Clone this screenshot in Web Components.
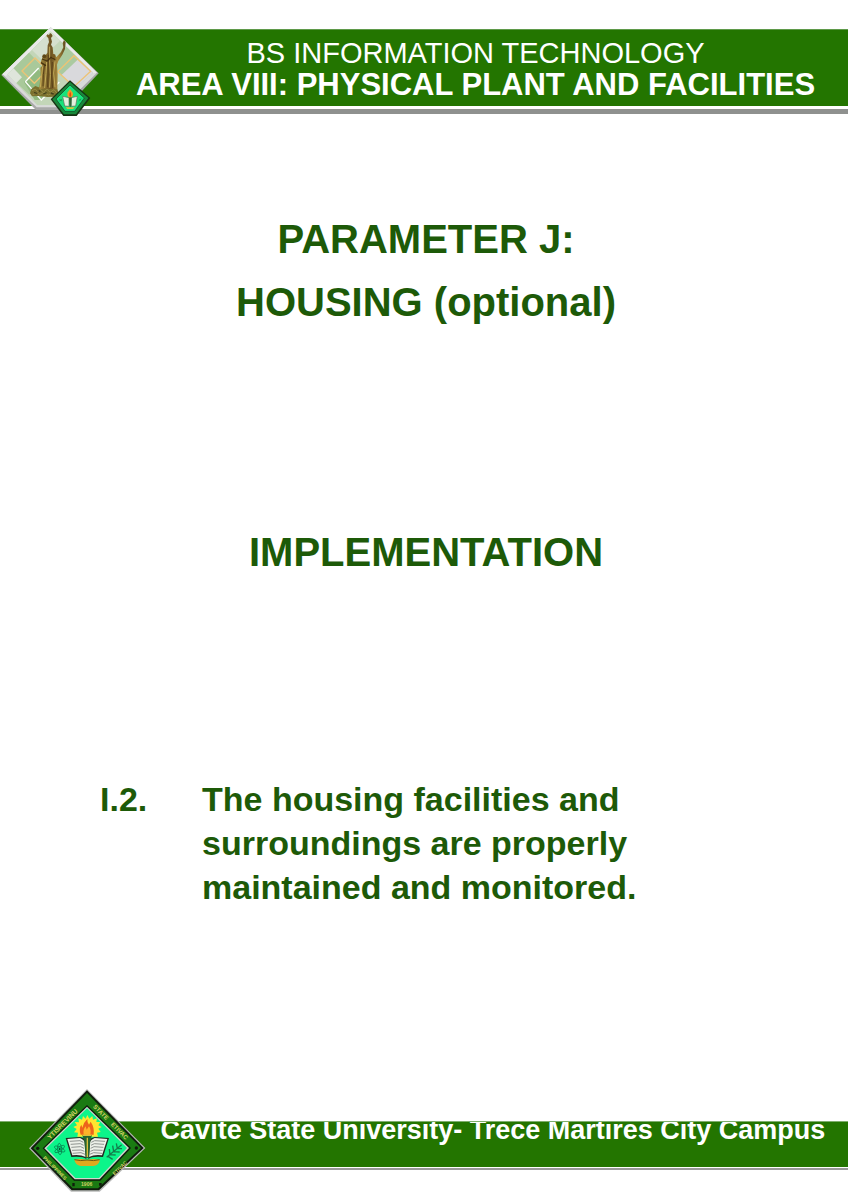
<!DOCTYPE html>
<html lang="en">
<head>
<meta charset="utf-8">
<meta name="viewport" content="width=device-width, initial-scale=1">
<title>Area VIII: Physical Plant and Facilities</title>
<style>
  body { margin: 0; background: #fff; font-family: "Liberation Sans", Arial, sans-serif; }
</style>
</head>
<body>
<cover-page>
  <area-header slot="header">
    <span slot="program">BS INFORMATION TECHNOLOGY</span>
    <span slot="area">AREA VIII: PHYSICAL PLANT AND FACILITIES</span>
  </area-header>
  <section-title>PARAMETER J:<br>HOUSING (optional)</section-title>
  <section-title>IMPLEMENTATION</section-title>
  <numbered-item>
    <span slot="number">I.2.</span>
    The housing facilities and surroundings are properly maintained and monitored.
  </numbered-item>
  <campus-footer slot="footer">Cavite State University- Trece Martires City Campus</campus-footer>
</cover-page>

<script>
function define(name, html) {
  const template = document.createElement('template');
  template.innerHTML = html;
  customElements.define(name, class extends HTMLElement {
    constructor() {
      super();
      this.attachShadow({ mode: 'open' }).append(template.content.cloneNode(true));
    }
  });
}

/* Page frame: header, growing body, footer */
define('cover-page', `
<style>
  :host { display: flex; flex-direction: column; min-height: 100vh; }
  main { flex: 1; display: flex; flex-direction: column; gap: 187px; padding: 94px 96px 96px 100px; }
</style>
<slot name="header"></slot>
<main><slot></slot></main>
<slot name="footer"></slot>`);

define('area-header', `
<style>
  :host { display: block; position: relative; padding-top: 29px; }
  .bar { background: #237500; border-top: 1px solid #5f9a4a; box-sizing: border-box; min-height: 77px;
         padding: 8px 0 0 103px; color: #fff; text-align: center; }
  p, h1 { margin: 0; line-height: 31px; }
  p { font-size: 29px; }
  h1 { font-size: 31px; font-weight: bold; }
  .rule { margin-top: 3px; height: 5px; background: #8f918f; }
  statue-emblem { position: absolute; left: 0; top: 20px; }
</style>
<header>
  <div class="bar">
    <p><slot name="program"></slot></p>
    <h1><slot name="area"></slot></h1>
  </div>
  <div class="rule"></div>
  <statue-emblem></statue-emblem>
</header>`);

define('section-title', `
<style>
  :host { display: block; }
  h2 { margin: 0; color: #1d5a08; font-size: 40px; line-height: 63px; font-weight: bold; text-align: center; }
</style>
<h2><slot></slot></h2>`);

define('numbered-item', `
<style>
  :host { display: grid; grid-template-columns: 102px minmax(0, 450px); padding-top: 6px; color: #1d5a08;
          font-size: 34px; line-height: 44px; font-weight: bold; }
</style>
<slot name="number"></slot>
<div><slot></slot></div>`);

define('campus-footer', `
<style>
  :host { display: block; position: relative; padding-bottom: 30px; }
  .bar { background: #237500; border-top: 1px solid #7fae6d; box-sizing: border-box; height: 46px;
         padding-left: 138px; color: #fff; text-align: center; overflow: hidden; }
  p { margin: -7px 0 0; font-size: 27px; line-height: 30px; font-weight: bold; }
  .rule { margin-top: 1px; height: 2px; background: #9a9a9a; }
  university-seal { position: absolute; left: 28px; top: -33px; }
</style>
<footer>
  <div class="bar"><p><slot></slot></p></div>
  <div class="rule"></div>
  <university-seal></university-seal>
</footer>`);

/* Grey diamond plaque with the bronze statue and a small seal */
define('statue-emblem', `
<style>
  :host { display: block; width: 100px; height: 97px; }
  svg { display: block; }
</style>
<svg width="100" height="97" viewBox="0 0 300 291" aria-hidden="true">
  <defs>
    <clipPath id="face"><path d="M152 34 280 158 166 256H112L22 163Z"/></clipPath>
    <linearGradient id="bronze" x1="0" x2="1"><stop offset="0" stop-color="#a38a3c"/><stop offset=".45" stop-color="#6b5222"/><stop offset=".7" stop-color="#a98a3e"/><stop offset="1" stop-color="#5d481e"/></linearGradient>
  </defs>
  <path d="M152 22 296 160 192 270H108L4 165Z" fill="#a8a9a8"/>
  <path d="M152 22 291 158 186 262H110L7 163Z" fill="#d9dad9"/>
  <path d="M152 22 7 163 18 168 152 36 278 160 291 158Z" fill="#e9eae9"/>
  <g clip-path="url(#face)">
    <path d="M0 0H300V291H0Z" fill="#c3d6b8"/>
    <path d="M22 163 86 97 146 160 88 224Z" fill="#a9c99a"/>
    <path d="M40 144 66 172 40 198 0 163Z" fill="#dfe5db"/>
    <path d="M222 104 280 158 226 206 172 155Z" fill="#d9d9dc"/>
    <path d="M152 34 96 90 124 118 180 62Z" fill="#d5e0ce"/>
    <path d="M200 80 148 132 184 166 236 116Z" fill="#abcaa0"/>
    <path d="M72 186 112 146 152 188 124 240H104Z" fill="#91ba80"/>
    <path d="M66 153 105 114 142 150 103 190Z M173 155 222 107 272 154 222 200Z" fill="none" stroke="#edc374" stroke-width="4"/>
    <path d="M76 185 116 144M76 185 124 240 178 186" fill="none" stroke="#fff" stroke-width="4"/>
  </g>
  <path d="M94 207 106 198 122 204 140 196 160 202 172 206 178 228 168 230 142 231 116 228 96 229 90 220Z" fill="#7b702d"/>
  <path d="M96 212l10-5 6 8 10-7 8 9 12-10 8 10 12-8 10 12M98 224l13-6 8 6 13-7 13 8 16-8" fill="none" stroke="#988a45" stroke-width="3"/>
  <path d="M102 218l10 2M130 222l10-4M152 219l9 3M116 211l5 4" stroke="#42411c" stroke-width="4"/>
  <path d="M139 48 142 43 147 45 150 39 155 42 158 48 153 54 156 65 153 74 158 82 160 102 169 112 183 96 190 82 188 69 192 60 197 67 195 87 187 104 175 123 171 134 173 162 172 207H117L122 170 121 143 127 137 122 127 128 110 137 106 142 98 143 76 147 66 145 55Z" fill="url(#bronze)"/>
  <path d="M128 139 125 165 121 202M140 126 138 160 134 204M149 80V122L151 164 149 203M165 124 161 159 165 202" fill="none" stroke="#c4ab58" stroke-width="3"/>
  <path d="M134 132 130 164 129 199M145 104 144 165 143 202M157 126 155 168 158 204" fill="none" stroke="#5a4119" stroke-width="3"/>
  <path d="M126 117 142 123 153 112 166 119M123 128 138 137" fill="none" stroke="#493510" stroke-width="4"/>
  <circle cx="133" cy="109" r="6" fill="#5f4817"/><circle cx="161" cy="108" r="6" fill="#765b23"/>
  <path d="M210 181 271 234 230 288H190L152 238Z" fill="#153313"/>
  <path d="M210 186 265 234 228 283H192L157 238Z" fill="#18883a"/>
  <path d="M210 195 253 234 224 274H195L168 237Z" fill="#18e27b" stroke="#123d20" stroke-width="2"/>
  <path d="M188 229 207 233V259L194 258ZM232 229 214 233V259L227 258Z" fill="#e4f0dd" stroke="#606b58" stroke-width="2"/>
  <path d="M207 232H215L213 260H209Z" fill="#326637"/>
  <path d="M202 226Q201 216 206 213L210 207 217 216Q222 224 215 232H206Z" fill="#f29b25"/>
  <path d="M208 229Q207 219 211 215 215 222 213 230Z" fill="#e04818"/>
  <path d="M197 262H224L219 267H202Z" fill="#d7c63e"/>
  <path d="M178 238l8 5m0-5-8 5M236 243l8-7m-5 1 4 5" stroke="#188247" stroke-width="2"/>
</svg>`);

/* University seal: lettered green frame, flame, torch and open book */
define('university-seal', `
<style>
  :host { display: block; width: 119px; height: 105px; }
  svg { display: block; }
  text { font: bold 20px "Liberation Sans", Arial, sans-serif; fill: #d3d065; text-anchor: middle; }
  .mid { font-size: 18px; }
  .small { font-size: 15px; }
</style>
<svg width="119" height="105" viewBox="24 24 357 315" role="img" aria-label="Cavite State University seal">
  <path d="M201 27 376 204 239 335H153L27 205Z" fill="#b9bab9"/>
  <path d="M201 31 371 204 237 331H155L32 205Z" fill="#101c0c"/>
  <path d="M201 39 363 204 234 325H158L40 205Z" fill="#1a7a12"/>
  <path d="M201 75 333 204 241 302H162L68 205Z" fill="#0c180b"/>
  <path d="M201 80 327 204 239 298H164L73 205Z" fill="#d0d6cd"/>
  <path d="M201 85 321 204 237 294H166L79 205Z" fill="#0cf58a"/>
  <text transform="translate(132 137) rotate(-45)">YTISREVINU</text>
  <text class="mid" transform="translate(238 101) rotate(45)">STATE</text>
  <text class="mid" transform="translate(294 157) rotate(45)">ETIVAC</text>
  <text class="small" transform="translate(303 268) rotate(-44)">ETIVAC</text>
  <text class="small" transform="translate(101 268) rotate(45)">PHILIPPINES</text>
  <text class="small" x="200" y="319">1906</text>
  <g fill="#101c0c"><circle cx="53" cy="205" r="5"/><circle cx="349" cy="204" r="5"/><path d="M157 309h7v10h-7zM237 309h8v8h-8z"/></g>
  <path d="M202 105 208 116 217 108 219 119 231 115 229 126 241 126 235 136 245 141 235 146 242 156 231 158 234 170H172L174 158 162 157 170 147 160 141 171 136 164 126 177 127 175 115 186 119 189 108 197 116Z" fill="#ffe52f"/>
  <path d="M182 164Q176 145 184 134L187 143Q190 128 202 117 201 129 207 134L212 125Q224 142 221 164Z" fill="#ed631b"/>
  <path d="M191 164Q188 149 197 139L200 149 207 139Q214 149 211 165Z" fill="#ffb429"/>
  <path d="M137 174 181 171Q195 174 199 184V237Q188 228 154 231Z" fill="#232821"/>
  <path d="M267 174 224 171Q210 174 205 184V237Q216 228 249 231Z" fill="#232821"/>
  <path d="M142 177 180 174Q192 179 194 187L197 231Q181 223 157 226ZM262 177 224 174Q212 179 210 187L207 231Q223 223 246 226Z" fill="#edf0e9"/>
  <path d="M149 184l31-2 10 5M152 193l29-2 10 5M154 202l28-2 10 5M156 211l27-1 10 4M158 220l25-2 12 5M255 184l-31-2-10 5M252 193l-29-2-10 5M250 202l-28-2-10 5M248 211l-27-1-10 4M246 220l-25-2-12 5" fill="none" stroke="#8f9490" stroke-width="3"/>
  <path d="M187 166H216L211 183 207 234H197L193 183Z" fill="#29632f"/>
  <path d="M189 166H214M202 173V231" stroke="#dac03a" stroke-width="4"/>
  <path d="M163 239Q182 234 201 240 221 234 239 239L239 244Q235 256 220 258H182Q166 255 163 239Z" fill="#e0aa1e"/>
  <path d="M163 239Q182 244 201 240 221 244 239 239" fill="none" stroke="#725b12" stroke-width="3"/>
  <g fill="none" stroke="#087047" stroke-width="2"><ellipse cx="119" cy="207" rx="17" ry="6" transform="rotate(25 119 207)"/><ellipse cx="119" cy="207" rx="17" ry="6" transform="rotate(85 119 207)"/><ellipse cx="119" cy="207" rx="17" ry="6" transform="rotate(145 119 207)"/></g>
  <circle cx="119" cy="207" r="3" fill="#093f28"/>
  <path d="M260 232 305 194M270 224l-2-17M270 224l17 1M281 215l-3-18M281 215l18 1M292 205l-3-15M292 205l14 1M264 229l14 9" fill="none" stroke="#147d4d" stroke-width="4"/>
</svg>`);
</script>
</body>
</html>
